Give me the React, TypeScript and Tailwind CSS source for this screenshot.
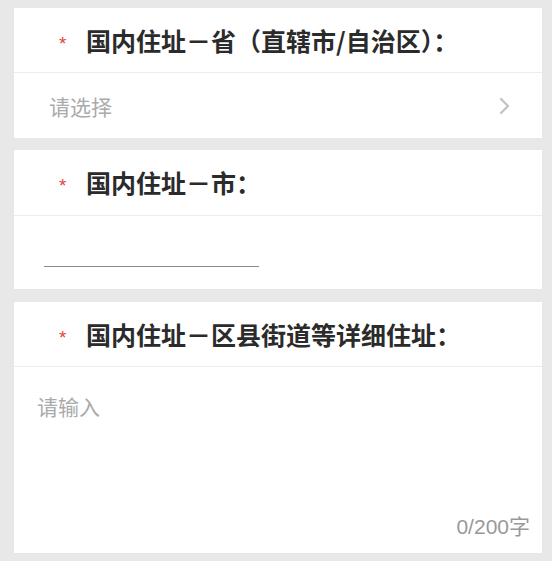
const FONT = "font-['Noto_Sans_CJK_SC','Noto_Sans',sans-serif]";

function Header({ title, h }: { title: string; h: string }) {
  return (
    <div className={`flex items-center ${h} pl-[45px] border-b border-[#ececec]`}>
      <span className="w-[27px] text-[19px] leading-none text-[#e0453a] font-['Liberation_Sans',sans-serif] pt-[6px]">
        *
      </span>
      <span className="text-[25px] leading-none font-bold text-[#2b2b2b]">{title}</span>
    </div>
  );
}

export default function App() {
  return (
    <div className={`${FONT} bg-[#e8e8e8] h-[561px] pt-[8px] pl-[14px] pr-[10px] flex flex-col`}>
      <div className="bg-white">
        <Header title="国内住址－省（直辖市/自治区）：" h="h-[65px]" />
        <div className="h-[65px] flex items-center justify-between pl-[35px] pr-[31px]">
          <span className="text-[21px] leading-[28px] text-[#aaaaaa]">请选择</span>
          <svg width="13" height="18" viewBox="0 0 13 18" fill="none">
            <polyline points="3,2 10,9 3,16" stroke="#c4c4c4" strokeWidth="2.4" strokeLinecap="round" strokeLinejoin="round" />
          </svg>
        </div>
      </div>

      <div className="bg-white mt-[12px]">
        <Header title="国内住址－市：" h="h-[66px]" />
        <div className="h-[73px] pl-[30px] pt-[20px]">
          <input
            type="text"
            className="w-[215px] h-[31px] border-b border-[#8a8a8a] outline-none text-[20px] bg-transparent"
          />
        </div>
      </div>

      <div className="bg-white mt-[13px]">
        <Header title="国内住址－区县街道等详细住址：" h="h-[65px]" />
        <div className="h-[186px] flex flex-col pl-[23px] pr-[12px] pt-[25px] pb-[12px]">
          <textarea
            placeholder="请输入"
            className="flex-1 resize-none outline-none text-[21px] leading-[28px] text-[#333] placeholder:text-[#aaaaaa] bg-transparent"
          />
          <div className="text-right text-[21px] leading-[28px] text-[#999999] font-['Liberation_Sans','Noto_Sans_CJK_SC',sans-serif]">
            0/200字
          </div>
        </div>
      </div>
    </div>
  );
}
